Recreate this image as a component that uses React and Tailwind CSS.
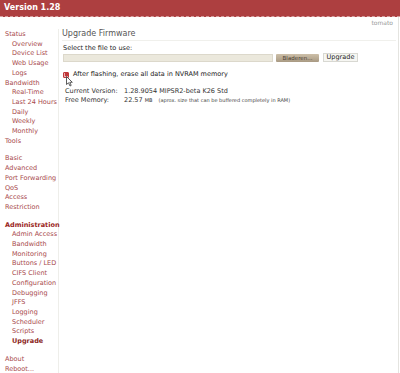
import React from 'react';

const menu = [
  { label: 'Status' },
  { label: 'Overview', sub: true },
  { label: 'Device List', sub: true },
  { label: 'Web Usage', sub: true },
  { label: 'Logs', sub: true },
  { label: 'Bandwidth' },
  { label: 'Real-Time', sub: true },
  { label: 'Last 24 Hours', sub: true },
  { label: 'Daily', sub: true },
  { label: 'Weekly', sub: true },
  { label: 'Monthly', sub: true },
  { label: 'Tools' },
  { gap: true },
  { label: 'Basic' },
  { label: 'Advanced' },
  { label: 'Port Forwarding' },
  { label: 'QoS' },
  { label: 'Access', lines: ['Access', 'Restriction'] },
  { gap: true },
  { label: 'Administration', head: true },
  { label: 'Admin Access', sub: true },
  { label: 'Bandwidth', lines: ['Bandwidth', 'Monitoring'], sub: true },
  { label: 'Buttons / LED', sub: true },
  { label: 'CIFS Client', sub: true },
  { label: 'Configuration', sub: true },
  { label: 'Debugging', sub: true },
  { label: 'JFFS', sub: true },
  { label: 'Logging', sub: true },
  { label: 'Scheduler', sub: true },
  { label: 'Scripts', sub: true },
  { label: 'Upgrade', sub: true, active: true },
  { gap: true },
  { label: 'About' },
  { label: 'Reboot...' },
];

const Sidebar = () => (
  <div className="w-[59px] shrink-0 border-r border-[#eeeeea] pt-[1px]">
    {menu.map((item, i) => {
      if (item.gap) return <div key={i} className="h-[8px]" />;
      let cls = 'text-[#a8494b]';
      if (item.head) cls = 'text-[#9a1f22] font-bold';
      if (item.active) cls = 'text-[#8c1f22] font-bold';
      return (
        <div
          key={i}
          className={`${item.sub ? 'pl-[12px]' : 'pl-[5px]'} ${cls} leading-[9.7px] whitespace-nowrap`}
        >
          {item.lines ? item.lines.map((l) => <div key={l}>{l}</div>) : item.label}
        </div>
      );
    })}
  </div>
);

const Cursor = () => (
  <svg width="7" height="11" viewBox="0 0 7 11" className="absolute left-[3px] top-[6px]">
    <path d="M0.5 0.5 L0.5 8.5 L2.5 6.8 L4 10 L5.2 9.4 L3.8 6.3 L6.3 6.3 Z" fill="#fff" stroke="#333" strokeWidth="0.8" />
  </svg>
);

const Content = () => (
  <div className="flex-1 pl-[3px] pr-[2px]">
    <div className="text-[8px] text-[#555] leading-[10px] pb-[1px] border-b border-[#f0f0ec]">
      Upgrade Firmware
    </div>
    <div className="pl-[1px] pt-[3px]">
      <div className="text-[#222] leading-[9px]">Select the file to use:</div>
      <div className="flex items-center h-[9px]">
        <div className="w-[210px] h-[8px] bg-[#ebe8dc] border border-[#dcd8cb]" />
        <div className="ml-[3px] w-[43px] h-[8px] bg-gradient-to-b from-[#cdbfa8] to-[#a99a83] rounded-[1px] text-[#4a4033] text-[5.5px] leading-[8px] text-center">
          Bladeren...
        </div>
        <div className="ml-[4px] w-[35px] h-[9px] bg-[#f6f6f2] border border-[#d8d8d2] text-[#222] leading-[7px] text-center">
          Upgrade
        </div>
      </div>
      <div className="relative flex items-center mt-[8px] h-[9px]">
        <div className="w-[6px] h-[6px] rounded-[1px] bg-[#e8b0b0] border border-[#c0383a] flex items-center justify-center">
          <div className="w-[3px] h-[3px] bg-[#c0383a]" />
        </div>
        <Cursor />
        <span className="ml-[4px] text-[#222]">After flashing, erase all data in NVRAM memory</span>
      </div>
      <div className="mt-[8px] pl-[2px] text-[#333] leading-[9px]">
        <div className="flex">
          <span className="w-[59px]">Current Version:</span>
          <span>1.28.9054 MIPSR2-beta K26 Std</span>
        </div>
        <div className="flex items-baseline">
          <span className="w-[59px]">Free Memory:</span>
          <span>22.57 <span className="text-[5px]">MB</span></span>
          <span className="ml-[6px] text-[5px] text-[#444]">(aprox. size that can be buffered completely in RAM)</span>
        </div>
      </div>
    </div>
  </div>
);

export default function App() {
  return (
    <div
      className="w-[400px] h-[373px] bg-white overflow-hidden flex flex-col text-[6.5px]"
      style={{ fontFamily: '"DejaVu Sans", Verdana, sans-serif' }}
    >
      <div className="h-[17px] shrink-0 bg-[#ad3f40] border-b border-dashed border-[#d8a0a0] flex items-end pl-[4px] pb-[4px]">
        <span className="text-white font-bold text-[8px] leading-[9px]">Version 1.28</span>
      </div>
      <div className="flex flex-1 border-r border-[#e4e4e0] mr-[1px]">
        <div className="flex flex-col w-full">
          <div className="h-[12px] flex justify-end pr-[5px] text-[#999] text-[6px] leading-[12px]">tomato</div>
          <div className="flex flex-1">
            <Sidebar />
            <Content />
          </div>
        </div>
      </div>
      <div className="h-[2px] shrink-0 bg-[#eeede6]" />
    </div>
  );
}
